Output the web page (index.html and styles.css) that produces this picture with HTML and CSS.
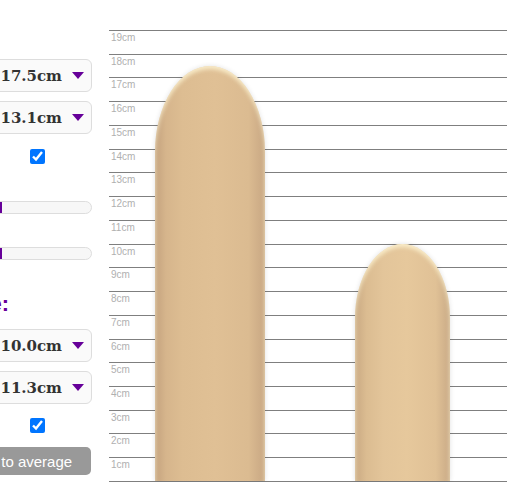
FILE: index.html
```html
<!DOCTYPE html>
<html>
<head>
	<title>Size Compare</title>
	<link rel="stylesheet" href="styles.css">
</head>
<body>
	<div class="page">
		<aside class="panel">
			<div class="select"><span>17.5cm</span><i class="caret"></i></div>
			<div class="select"><span>13.1cm</span><i class="caret"></i></div>
			<div class="check"><input type="checkbox" checked></div>

			<p class="label first">Length percentile:</p>
			<div class="meter"><div class="fill" style="width:60%"></div></div>
			<p class="label">Girth percentile: 2nd</p>
			<div class="meter"><div class="fill" style="width:60%"></div></div>

			<h2 class="heading">Average size:</h2>
			<div class="select"><span>10.0cm</span><i class="caret"></i></div>
			<div class="select"><span>11.3cm</span><i class="caret"></i></div>
			<div class="check second"><input type="checkbox" checked></div>
			<button class="reset">Reset to average</button>
		</aside>

		<main class="chart">
			<div class="scale">
				<div class="row">19cm</div>
				<div class="row">18cm</div>
				<div class="row">17cm</div>
				<div class="row">16cm</div>
				<div class="row">15cm</div>
				<div class="row">14cm</div>
				<div class="row">13cm</div>
				<div class="row">12cm</div>
				<div class="row">11cm</div>
				<div class="row">10cm</div>
				<div class="row">9cm</div>
				<div class="row">8cm</div>
				<div class="row">7cm</div>
				<div class="row">6cm</div>
				<div class="row">5cm</div>
				<div class="row">4cm</div>
				<div class="row">3cm</div>
				<div class="row">2cm</div>
				<div class="row">1cm</div>
			</div>
			<div class="bars">
				<!-- 23.7px per cm tall, 8.4px per cm of girth wide -->
				<div class="bar" style="--w:110px;--h:415px"></div>
				<div class="bar average" style="--w:95px;--h:237px"></div>
			</div>
		</main>
	</div>
</body>
</html>
```

FILE: styles.css
```css
body {
	margin: 0;
	padding: 0;
	background-color: #fff;
	font-family: "Liberation Sans", Arial, sans-serif;
	overflow: hidden;
}
.page {
	display: flex;
	align-items: flex-start;
	margin-left: -132px;
}

/* left controls */
.panel {
	display: flex;
	flex-direction: column;
	width: 224px;
	flex-shrink: 0;
	padding-top: 59px;
}
.select {
	display: flex;
	align-items: center;
	justify-content: flex-end;
	gap: 10px;
	height: 33px;
	box-sizing: border-box;
	padding-right: 7px;
	margin-bottom: 9px;
	border: 1px solid #ddd;
	border-radius: 6px;
	background-color: #fafafa;
	font-family: "DejaVu Serif", serif;
	font-weight: bold;
	font-size: 15px;
	color: #333;
}
.caret {
	width: 0;
	height: 0;
	border-left: 6px solid transparent;
	border-right: 6px solid transparent;
	border-top: 7px solid #660099;
}
.check {
	display: flex;
	justify-content: flex-end;
	padding-right: 47px;
	margin-top: 6px;
}
.check input {
	width: 15px;
	height: 15px;
	margin: 0;
}
.check.second {
	margin-top: 5px;
}
.label {
	margin: 15px 0 2px;
	font-size: 12px;
	line-height: 16px;
	color: #777;
	white-space: nowrap;
}
.label.first {
	margin-top: 17px;
	margin-bottom: 4px;
}
.meter {
	height: 13px;
	box-sizing: border-box;
	border: 1px solid #ddd;
	border-radius: 7px;
	background-color: #f7f7f7;
	overflow: hidden;
}
.fill {
	height: 100%;
	background-color: #660099;
}
.heading {
	margin: 31px 0 12px;
	font-size: 22px;
	line-height: 26px;
	color: #660099;
}
.reset {
	align-self: flex-end;
	width: 152px;
	height: 28px;
	margin: 14px 1px 0 0;
	border: none;
	border-radius: 5px;
	background-color: #999;
	color: #fff;
	font-family: "Liberation Sans", Arial, sans-serif;
	font-size: 15px;
	cursor: pointer;
}

/* chart */
.chart {
	position: relative;
	width: 398px;
	flex-shrink: 0;
	margin: 30px 0 0 17px;
}
.scale {
	display: flex;
	flex-direction: column;
	height: 452px;
}
.row {
	flex: 1;
	border-top: 1px solid #7f7f7f;
	padding: 1px 0 0 2px;
	font-size: 10px;
	line-height: 12px;
	color: #b0b0b0;
}
.row:last-child {
	border-bottom: 1px solid #7f7f7f;
}
.bars {
	position: absolute;
	top: 0;
	left: 0;
	right: 0;
	bottom: 1px;
	display: flex;
	align-items: flex-end;
	gap: 90px;
	padding-left: 46px;
}
.bar {
	width: var(--w);
	height: var(--h);
	border-radius: calc(var(--w) / 2) calc(var(--w) / 2) 0 0 / calc(var(--w) * 0.78) calc(var(--w) * 0.78) 0 0;
	background: linear-gradient(90deg, #c4a27e 0%, #d6b58c 10%, #ddbd92 25%, #e0c095 55%, #dbbb91 85%, #c8a783 100%);
	box-shadow: 0 0 5px rgba(0, 0, 0, 0.12), inset 0 3px 4px rgba(255, 248, 215, 0.8);
}
.bar.average {
	background: linear-gradient(90deg, #c9a983 0%, #dbbc91 12%, #e3c59a 30%, #e6c89c 55%, #e0c196 85%, #c9aa86 100%);
}
```
